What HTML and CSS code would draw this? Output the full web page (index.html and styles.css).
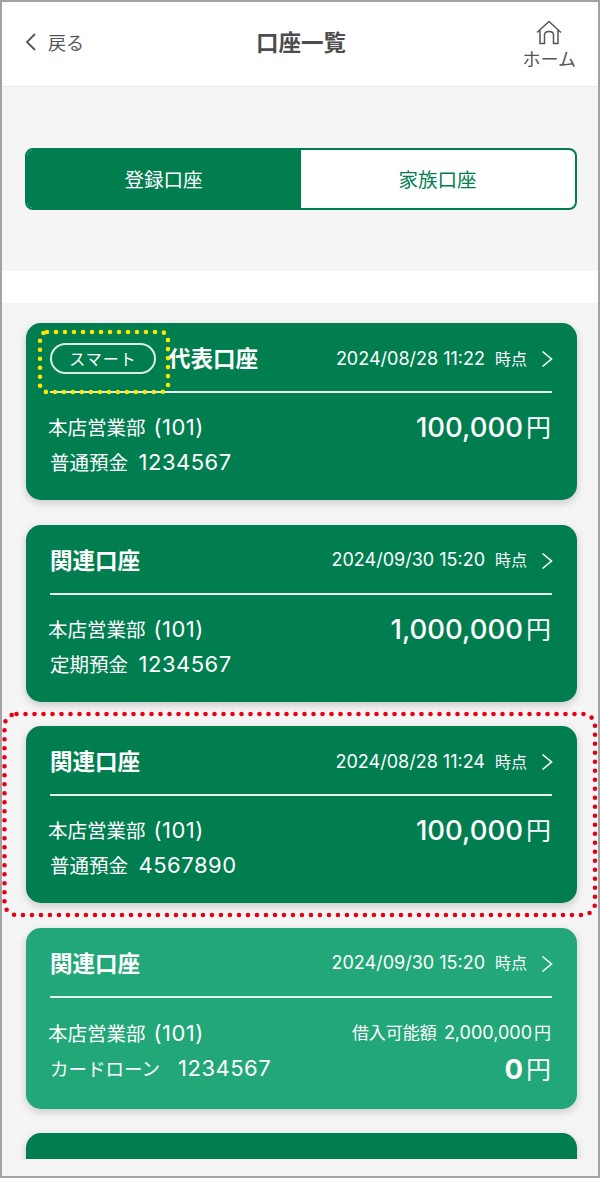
FILE: index.html
```html
<!DOCTYPE html>
<html lang="ja">
<head>
    <meta charset="UTF-8">
    <meta name="viewport" content="width=device-width, initial-scale=1.0">
    <title>口座一覧</title>
    <link rel="stylesheet" href="styles.css">
</head>
<body>
    <div class="screen">
        <header class="topbar">
            <a class="back">
                <svg class="back-icon" width="12" height="20" viewBox="0 0 12 20"><path d="M10 2 L2 10 L10 18" fill="none" stroke="#555" stroke-width="1.8"/></svg>
                <span>戻る</span>
            </a>
            <h1 class="title">口座一覧</h1>
            <a class="home">
                <svg width="26" height="26" viewBox="0 0 26 26"><path d="M1 12.5 L13 1.5 L25 12.5 M4 10 V23.5 H8.5 V15 Q8.5 11.5 13 11.5 Q17.5 11.5 17.5 15 V23.5 H22 V10" fill="none" stroke="#555" stroke-width="1.5"/></svg>
                <span class="home-label">ホーム</span>
            </a>
        </header>

        <section class="tabs-area">
            <div class="tabs">
                <div class="tab tab-active">登録口座</div>
                <div class="tab">家族口座</div>
            </div>
        </section>

        <div class="strip"></div>

        <main class="list">
            <article class="card">
                <div class="card-head">
                    <span class="badge">スマート</span>
                    <span class="card-title">代表口座</span>
                    <span class="stamp">2024/08/28 11:22<span class="stamp-unit">時点</span></span>
                    <svg class="chev" width="12" height="18" viewBox="0 0 12 18"><path d="M1.5 1.5 L10.5 9 L1.5 16.5" fill="none" stroke="#fff" stroke-width="1.6"/></svg>
                </div>
                <div class="card-body">
                    <div class="branch">本店営業部<span class="branch-no">(101)</span></div>
                    <div class="amount">100,000<span class="yen">円</span></div>
                    <div class="acct">普通預金<span class="acct-no">1234567</span></div>
                </div>
            </article>

            <article class="card">
                <div class="card-head">
                    <span class="card-title">関連口座</span>
                    <span class="stamp">2024/09/30 15:20<span class="stamp-unit">時点</span></span>
                    <svg class="chev" width="12" height="18" viewBox="0 0 12 18"><path d="M1.5 1.5 L10.5 9 L1.5 16.5" fill="none" stroke="#fff" stroke-width="1.6"/></svg>
                </div>
                <div class="card-body">
                    <div class="branch">本店営業部<span class="branch-no">(101)</span></div>
                    <div class="amount">1,000,000<span class="yen">円</span></div>
                    <div class="acct">定期預金<span class="acct-no">1234567</span></div>
                </div>
            </article>

            <article class="card">
                <div class="card-head">
                    <span class="card-title">関連口座</span>
                    <span class="stamp">2024/08/28 11:24<span class="stamp-unit">時点</span></span>
                    <svg class="chev" width="12" height="18" viewBox="0 0 12 18"><path d="M1.5 1.5 L10.5 9 L1.5 16.5" fill="none" stroke="#fff" stroke-width="1.6"/></svg>
                </div>
                <div class="card-body">
                    <div class="branch">本店営業部<span class="branch-no">(101)</span></div>
                    <div class="amount">100,000<span class="yen">円</span></div>
                    <div class="acct">普通預金<span class="acct-no">4567890</span></div>
                </div>
            </article>

            <article class="card card-loan">
                <div class="card-head">
                    <span class="card-title">関連口座</span>
                    <span class="stamp">2024/09/30 15:20<span class="stamp-unit">時点</span></span>
                    <svg class="chev" width="12" height="18" viewBox="0 0 12 18"><path d="M1.5 1.5 L10.5 9 L1.5 16.5" fill="none" stroke="#fff" stroke-width="1.6"/></svg>
                </div>
                <div class="card-body">
                    <div class="branch">本店営業部<span class="branch-no">(101)</span></div>
                    <div class="limit">借入可能額<span class="limit-no">2,000,000</span><span class="limit-yen">円</span></div>
                    <div class="acct acct-loan">カードローン<span class="acct-no acct-no-wide">1234567</span></div>
                    <div class="amount amount-zero">0<span class="yen">円</span></div>
                </div>
            </article>

            <article class="card card-cut"></article>
        </main>

        <div class="bottom"></div>

        <!-- annotation marks drawn over the screenshot -->
        <svg class="mark mark-yellow" width="136" height="68" viewBox="0 0 136 68"><rect x="4" y="4" width="128" height="60" rx="7" fill="none" stroke="#ffe600" stroke-width="4.6" stroke-linecap="round" stroke-dasharray="0 9"/></svg>
        <svg class="mark mark-red" width="600" height="212" viewBox="0 0 600 212"><rect x="4.5" y="4" width="590.5" height="201" rx="12" fill="none" stroke="#e60012" stroke-width="4.6" stroke-linecap="round" stroke-dasharray="0 9"/></svg>
    </div>
</body>
</html>
```
FILE: styles.css
```css
* {
    box-sizing: border-box;
}
body {
    margin: 0;
    font-family: Inter, "Noto Sans CJK JP", sans-serif;
    color: #555;
}
.screen {
    position: relative;
    width: 600px;
    height: 1178px;
    border: 2px solid #a3a3a3;
    background: #f5f5f5;
    overflow: hidden;
}

/* header */
.topbar {
    display: flex;
    align-items: center;
    height: 85px;
    padding: 0 22px 0 23px;
    background: #fff;
    border-bottom: 1px solid #e2efe9;
    position: relative;
}
.back {
    display: flex;
    align-items: center;
    gap: 11px;
    font-size: 18px;
    margin-bottom: 4px;
}
.title {
    position: absolute;
    left: 2px;
    right: 0;
    top: 22px;
    margin: 0;
    text-align: center;
    font-size: 22.5px;
    line-height: 38px;
    font-weight: 700;
    color: #4d4d4d;
}
.home {
    margin-left: auto;
    margin-top: 2px;
    display: flex;
    flex-direction: column;
    align-items: center;
    font-size: 18px;
    line-height: 20px;
}
.home-label {
    margin-top: 4px;
}

/* tabs */
.tabs-area {
    height: 184px;
    padding: 61px 21px 0 23px;
}
.tabs {
    display: flex;
    height: 62px;
    border: 2px solid #017e4f;
    border-radius: 8px;
    background: #fff;
    overflow: hidden;
}
.tab {
    flex: 1;
    display: flex;
    align-items: center;
    justify-content: center;
    font-size: 19.5px;
    padding: 0 1px 2px 0;
    color: #017e4f;
}
.tab-active {
    background: #017e4f;
    color: #fff;
}
.strip {
    height: 32px;
    background: #fff;
}

/* cards */
.list {
    height: 856px;
    padding: 20px 21.5px 0 23.5px;
    display: flex;
    flex-direction: column;
    gap: 24.5px;
    overflow: hidden;
}
.card {
    flex: none;
    height: 177px;
    padding: 0 24.5px;
    border-radius: 15px;
    background: #017e4f;
    color: #fff;
    box-shadow: 0 3px 8px rgba(0, 0, 0, 0.18);
}
.card-loan {
    height: 181px;
    background: #22a778;
}
.card-cut {
    height: 60px;
}
.card-head {
    display: flex;
    align-items: center;
    height: 70px;
    border-bottom: 2px solid #e6f2ed;
}
.badge {
    width: 106px;
    height: 31px;
    margin-right: 12px;
    margin-top: 2px;
    border: 2px solid rgba(255, 255, 255, 0.85);
    border-radius: 16px;
    text-align: center;
    font-size: 16px;
    line-height: 28px;
    letter-spacing: 1px;
}
.card-title {
    font-size: 22.5px;
    font-weight: 700;
}
.stamp {
    margin-left: auto;
    margin-top: 3px;
    font-size: 18px;
    line-height: 24px;
}
.stamp-unit {
    margin-left: 10px;
    font-size: 16px;
}
.chev {
    margin-left: 14px;
    margin-right: -1px;
    margin-top: 4px;
}
.card-body {
    display: grid;
    grid-template-columns: auto auto;
    justify-content: space-between;
    grid-auto-rows: 35px;
    padding: 17px 1px 0 0;
}
.card-loan .card-body {
    padding-top: 18px;
}
.branch {
    font-size: 19.5px;
    line-height: 34px;
    margin-left: -2px;
}
.branch-no {
    margin-left: 8px;
    font-size: 22px;
    letter-spacing: 0.5px;
}
.acct {
    font-size: 19.5px;
    line-height: 34px;
}
.acct-loan {
    font-size: 18.5px;
}
.acct-no {
    margin-left: 10.5px;
    font-size: 22px;
    letter-spacing: 0.5px;
}
.acct-no-wide {
    margin-left: 18px;
}
.amount {
    font-size: 27.5px;
    line-height: 34px;
    font-weight: 500;
    text-align: right;
}
.amount-zero {
    margin-top: 1px;
    font-weight: 700;
}
.yen {
    margin-left: 3px;
    font-size: 25px;
    font-weight: 400;
}
.limit {
    font-size: 17px;
    line-height: 34px;
    text-align: right;
}
.limit-no {
    margin-left: 7px;
    font-size: 18px;
}
.limit-yen {
    margin-left: 2px;
    font-size: 17px;
}
.bottom {
    height: 18px;
    position: relative;
    background: #f5f5f5;
}

/* annotations */
.mark {
    position: absolute;
}
.mark-yellow {
    left: 34px;
    top: 326px;
}
.mark-red {
    left: -2px;
    top: 708px;
}
```
